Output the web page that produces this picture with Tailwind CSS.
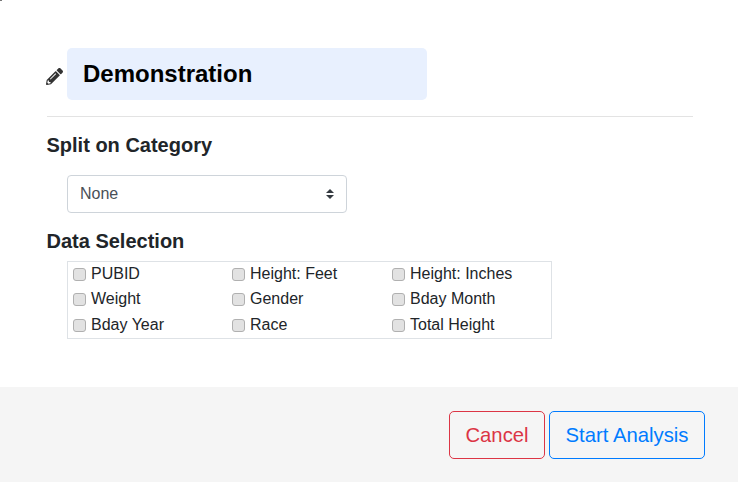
<!DOCTYPE html>
<html lang="en">
<head>
<meta charset="UTF-8">
<title>Demonstration</title>
<script src="https://cdn.jsdelivr.net/npm/@tailwindcss/browser@4"></script>
</head>
<body class="bg-white font-['Liberation_Sans',Arial,sans-serif] text-[#212529]">
<div class="relative flex h-[482px] w-[738px] flex-col overflow-hidden">
  <div class="absolute top-0 left-0 h-px w-[2px] bg-[#777]"></div>
  <!-- body -->
  <div class="h-[387px] pt-[48px] pr-[45px] pl-[46.5px]">
    <div class="flex items-end">
      <svg class="mb-[15.5px] -ml-[0.5px] h-[17px] w-[17px] shrink-0 text-[#333]" viewBox="0 0 512 512" fill="currentColor"><path d="M497.9 142.1l-46.1 46.1c-4.7 4.7-12.3 4.7-17 0l-111-111c-4.7-4.7-4.7-12.3 0-17l46.1-46.1c18.7-18.7 49.1-18.7 67.9 0l60.1 60.1c18.8 18.7 18.8 49.1 0 67.9zM284.2 99.8L21.6 362.4.4 483.9c-2.9 16.4 11.4 30.6 27.8 27.8l121.5-21.3 262.6-262.6c4.7-4.7 4.7-12.3 0-17l-111-111c-4.8-4.7-12.4-4.7-17.1 0zM124.1 339.9c-5.5-5.5-5.5-14.3 0-19.8l154-154c5.5-5.5 14.3-5.5 19.8 0s5.5 14.3 0 19.8l-154 154c-5.5 5.5-14.3 5.5-19.8 0zM88 424h48v36.3l-64.5 11.3-31.1-31.1L51.7 376H88v48z"/></svg>
      <div class="ml-[4px] flex h-[52px] w-[360px] items-center rounded-[5px] bg-[#e8f0fe] pl-4 text-2xl font-bold text-black">Demonstration</div>
    </div>
    <hr class="mt-4 border-[#e3e3e3]">
    <h2 class="mt-4 text-xl leading-6 font-bold">Split on Category</h2>
    <div class="mt-[18px] ml-[20.5px] flex h-[38px] w-[280px] items-center justify-between rounded border border-[#ced4da] pr-[12px] pl-3 text-base text-[#495057]">
      <span>None</span>
      <svg class="h-[10px] w-[8px]" viewBox="0 0 8 10" fill="#343a40"><path d="M4 0 8 4H0zM4 10 0 6h8z"/></svg>
    </div>
    <h2 class="mt-4 text-xl leading-6 font-bold">Data Selection</h2>
    <div class="mt-2 ml-[20.5px] grid h-[78px] w-[485px] grid-cols-[160px_160px_160px] content-start border border-[#dee2e6] text-base leading-6">
      <label class="flex h-[24px] items-center pl-[5px]"><input type="checkbox" class="mr-[5px] h-[13px] w-[13px] appearance-none rounded-[3px] border border-[#b0b0b0] bg-[#e2e2e2]">PUBID</label>
      <label class="flex h-[24px] items-center pl-[4px]"><input type="checkbox" class="mr-[5px] h-[13px] w-[13px] appearance-none rounded-[3px] border border-[#b0b0b0] bg-[#e2e2e2]">Height: Feet</label>
      <label class="flex h-[24px] items-center pl-[4px]"><input type="checkbox" class="mr-[5px] h-[13px] w-[13px] appearance-none rounded-[3px] border border-[#b0b0b0] bg-[#e2e2e2]">Height: Inches</label>
      <label class="mt-px flex h-[24px] items-center pl-[5px]"><input type="checkbox" class="mr-[5px] h-[13px] w-[13px] appearance-none rounded-[3px] border border-[#b0b0b0] bg-[#e2e2e2]">Weight</label>
      <label class="mt-px flex h-[24px] items-center pl-[4px]"><input type="checkbox" class="mr-[5px] h-[13px] w-[13px] appearance-none rounded-[3px] border border-[#b0b0b0] bg-[#e2e2e2]">Gender</label>
      <label class="mt-px flex h-[24px] items-center pl-[4px]"><input type="checkbox" class="mr-[5px] h-[13px] w-[13px] appearance-none rounded-[3px] border border-[#b0b0b0] bg-[#e2e2e2]">Bday Month</label>
      <label class="mt-[2px] flex h-[24px] items-center pl-[5px]"><input type="checkbox" class="mr-[5px] h-[13px] w-[13px] appearance-none rounded-[3px] border border-[#b0b0b0] bg-[#e2e2e2]">Bday Year</label>
      <label class="mt-[2px] flex h-[24px] items-center pl-[4px]"><input type="checkbox" class="mr-[5px] h-[13px] w-[13px] appearance-none rounded-[3px] border border-[#b0b0b0] bg-[#e2e2e2]">Race</label>
      <label class="mt-[2px] flex h-[24px] items-center pl-[4px]"><input type="checkbox" class="mr-[5px] h-[13px] w-[13px] appearance-none rounded-[3px] border border-[#b0b0b0] bg-[#e2e2e2]">Total Height</label>
    </div>
  </div>
  <!-- footer -->
  <div class="flex h-[95px] items-start justify-end gap-1 bg-[#f5f5f5] pt-6 pr-[33px]">
    <button class="h-12 w-[96px] rounded-[5px] border border-[#dc3545] text-[20.3px] text-[#dc3545]">Cancel</button>
    <button class="h-12 w-[156px] rounded-[5px] border border-[#007bff] text-[20.3px] text-[#007bff]">Start Analysis</button>
  </div>
</div>
</body>
</html>
